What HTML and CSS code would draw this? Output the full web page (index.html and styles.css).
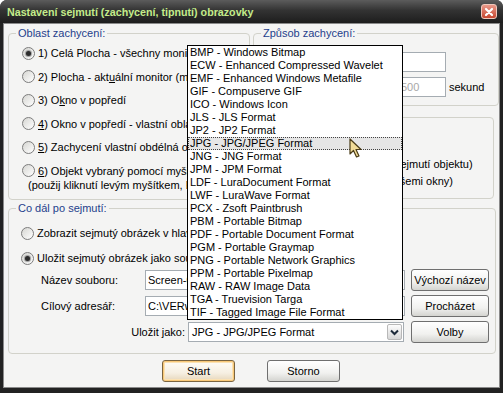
FILE: index.html
```html
<!DOCTYPE html>
<html lang="cs">

<head>
    <meta charset="UTF-8">
    <meta name="viewport" content="width=device-width, initial-scale=1.0">
    <title>Nastavení sejmutí</title>
    <link rel="stylesheet" href="styles.css">
</head>

<body>
    <div class="window">
        <div class="titlebar">
            <span class="title">Nastavení sejmutí (zachycení, tipnutí) obrazovky</span>
            <span class="close">
                <svg width="10" height="10" viewBox="0 0 10 10"><path d="M2 2 L8 8 M8 2 L2 8" stroke="#fff" stroke-width="2.2" stroke-linecap="round"/></svg>
            </span>
        </div>

        <div class="client">
            <div class="top">
                <fieldset class="group area">
                    <legend>Oblast zachycení:</legend>
                    <div class="opts">
                        <label class="opt"><span class="radio on"></span><span>1) Celá Plocha - všechny monitory</span></label>
                        <label class="opt"><span class="radio"></span><span>2) Plocha - akt<u>u</u>ální monitor (myš)</span></label>
                        <label class="opt"><span class="radio"></span><span>3) O<u>k</u>no v popředí</span></label>
                        <label class="opt"><span class="radio"></span><span><u>4</u>) Okno v popředí - vlastní oblast</span></label>
                        <label class="opt"><span class="radio"></span><span><u>5</u>) Zachycení vlastní obdélná oblasti</span></label>
                        <label class="opt last"><span class="radio"></span><span><u>6</u>) Objekt vybraný pomocí myši</span></label>
                        <div class="hint">(použij kliknutí levým myšítkem, ESC - zrušit)</div>
                    </div>
                </fieldset>

                <div class="rightcol">
                    <fieldset class="group mode">
                        <legend>Způsob zachycení:</legend>
                        <div class="field first"><span class="flabel">Klávesa:</span><input class="inp" type="text" value=""></div>
                        <div class="field"><span class="flabel">Zpoždění:</span><input class="inp" type="text" value="500" disabled><span class="unit">sekund</span></div>
                    </fieldset>
                    <fieldset class="group extra">
                        <div class="line">(po sejmutí objektu)</div>
                        <div class="line">(se všemi okny)</div>
                    </fieldset>
                </div>
            </div>

            <fieldset class="group after">
                <legend>Co dál po sejmutí:</legend>
                <label class="opt"><span class="radio"></span><span>Zobrazit sejmutý obrázek v hlavním okně</span></label>
                <label class="opt second"><span class="radio on"></span><span>Uložit sejmutý obrázek jako soubor</span></label>
                <div class="row name">
                    <span class="rlabel">Název souboru:</span>
                    <input class="inp wide" type="text" value="Screen-001">
                    <button class="btn side">Výchozí název</button>
                </div>
                <div class="row">
                    <span class="rlabel">Cílový adresář:</span>
                    <input class="inp wide" type="text" value="C:\VERwork\Screens">
                    <button class="btn side">Procházet</button>
                </div>
                <div class="row">
                    <span class="rlabel right">Uložit jako:</span>
                    <div class="combo">
                        <span class="combo-text">JPG - JPG/JPEG Format</span>
                        <span class="combo-btn">
                            <svg width="9" height="7" viewBox="0 0 9 7"><path d="M1 1.5 L4.5 5 L8 1.5" fill="none" stroke="#1d2a3a" stroke-width="2"/></svg>
                        </span>
                    </div>
                    <button class="btn side">Volby</button>
                </div>
            </fieldset>

            <div class="actions">
                <button class="btn start">Start</button>
                <button class="btn storno">Storno</button>
            </div>

            <ul class="droplist">
                <li>BMP - Windows Bitmap</li>
                <li>ECW - Enhanced Compressed Wavelet</li>
                <li>EMF - Enhanced Windows Metafile</li>
                <li>GIF - Compuserve GIF</li>
                <li>ICO - Windows Icon</li>
                <li>JLS - JLS Format</li>
                <li>JP2 - JP2 Format</li>
                <li class="sel">JPG - JPG/JPEG Format</li>
                <li>JNG - JNG Format</li>
                <li>JPM - JPM Format</li>
                <li>LDF - LuraDocument Format</li>
                <li>LWF - LuraWave Format</li>
                <li>PCX - Zsoft Paintbrush</li>
                <li>PBM - Portable Bitmap</li>
                <li>PDF - Portable Document Format</li>
                <li>PGM - Portable Graymap</li>
                <li>PNG - Portable Network Graphics</li>
                <li>PPM - Portable Pixelmap</li>
                <li>RAW - RAW Image Data</li>
                <li>TGA - Truevision Targa</li>
                <li>TIF - Tagged Image File Format</li>
            </ul>

            <svg class="cursor" width="14" height="21" viewBox="0 0 14 21">
                <path d="M1 1 L1 16 L4.5 12.5 L7.5 19 L10 18 L7 11.5 L12 11.5 Z" fill="#f2dc98" stroke="#4a3c18" stroke-width="1.2" stroke-linejoin="round"/>
            </svg>
        </div>
    </div>
</body>

</html>
```

FILE: styles.css
```css
* {
    box-sizing: border-box;
}
body {
    margin: 0;
    background: #fff;
    font-family: "Liberation Sans", Arial, sans-serif;
    font-size: 11px;
    color: #000;
}
.window {
    width: 503px;
    height: 393px;
    background: #222;
    border-radius: 7px 7px 0 0;
    display: flex;
    flex-direction: column;
}
.titlebar {
    height: 23px;
    display: flex;
    align-items: center;
    justify-content: space-between;
    padding: 0 6px 0 7px;
    background: linear-gradient(#5c5c5c, #333 45%, #1d1d1d);
    border-radius: 7px 7px 0 0;
}
.title {
    color: #c4ec8a;
    font-weight: bold;
    font-size: 10.7px;
}
.close {
    width: 16px;
    height: 15px;
    border-radius: 3px;
    border: 1px solid #efc8bc;
    background: linear-gradient(#e9998a, #c7472f);
    display: flex;
    align-items: center;
    justify-content: center;
}
.client {
    position: relative;
    flex: 1;
    margin: 0 3px 5px;
    padding: 3px 0 0 5px;
    background: #f4f4f3;
    box-shadow: inset 1px 1px 0 #8a8a8a, inset -1px -1px 0 #8a8a8a;
}
.top {
    display: flex;
    gap: 3px;
}
.group {
    margin: 0;
    padding: 0;
    min-width: 0;
    border: 1px solid #d2d2ca;
    border-radius: 4px;
}
legend {
    margin-left: 7px;
    padding: 0 2px;
    line-height: 15px;
    color: #1f3f8c;
}
.area {
    width: 242px;
    height: 174px;
}
.opts {
    padding: 5px 0 0 13px;
}
.opt {
    display: flex;
    align-items: center;
    gap: 3px;
    height: 14px;
    line-height: 14px;
    white-space: nowrap;
    margin-bottom: 9.5px;
}
.opt.last {
    margin-bottom: 0;
}
.hint {
    line-height: 14px;
    white-space: nowrap;
    padding-left: 6px;
}
.radio {
    flex: none;
    width: 13px;
    height: 13px;
    border-radius: 50%;
    border: 1px solid #7c7c7c;
    background: linear-gradient(135deg, #d6d6d2, #fff);
    display: inline-flex;
    align-items: center;
    justify-content: center;
}
.radio.on::after {
    content: "";
    width: 5px;
    height: 5px;
    border-radius: 50%;
    background: #2c2c2c;
    box-shadow: 0 0 1px 1px #9a9a9a;
}
.rightcol {
    width: 246px;
}
.mode {
    height: 80px;
}
.field {
    display: flex;
    align-items: center;
    height: 20px;
    padding-left: 3px;
    margin-top: 5px;
}
.field.first {
    margin-top: 11px;
}
.flabel {
    width: 140px;
}
.inp {
    height: 20px;
    width: 49px;
    border: 1px solid #a5acb2;
    background: #fff;
    font: inherit;
    padding: 0 3px;
    color: #000;
}
.inp:disabled {
    color: #a8a8a8;
}
.unit {
    margin-left: 3px;
}
.group.extra {
    width: 241px;
    height: 82px;
    margin-top: 11px;
    padding: 38px 0 0 122px;
}
.line {
    line-height: 17px;
    white-space: nowrap;
}
.group.after {
    width: 488px;
    height: 153px;
    margin-top: 1px;
    padding-left: 12px;
}
.after legend {
    margin-left: -5px;
}
.after .opt {
    margin: 10px 0 0;
}
.after .opt.second {
    margin-top: 11px;
}
.row {
    display: flex;
    align-items: center;
    height: 22px;
    margin-top: 4px;
    margin-left: 20px;
}
.row.name {
    margin-top: 4px;
}
.rlabel {
    width: 104px;
    white-space: nowrap;
}
.rlabel.right {
    width: 147px;
    text-align: right;
    padding-right: 3px;
}
.inp.wide {
    width: 260px;
    padding-left: 2px;
}
.combo {
    width: 216px;
    height: 20px;
    border: 1px solid #a5acb2;
    background: #fff;
    display: flex;
    align-items: center;
    justify-content: space-between;
    padding: 0 1px 0 3px;
}
.combo-btn {
    width: 15px;
    height: 16px;
    border: 1px solid #b8b8b8;
    border-radius: 2px;
    background: linear-gradient(#fdfdfd, #d6d6d6);
    display: flex;
    align-items: center;
    justify-content: center;
}
.btn {
    height: 22px;
    border: 1px solid #6f6f6f;
    border-radius: 3px;
    background: linear-gradient(#fff, #f1f1ef 60%, #d4d4d0);
    font: inherit;
    color: #000;
    padding: 0;
}
.side {
    width: 78px;
    margin-left: 6px;
}
.row:last-child .side {
    margin-left: 7px;
}
.actions {
    display: flex;
    margin-top: 6px;
    padding-left: 154px;
    gap: 32px;
}
.start {
    width: 73px;
    border-color: #7a6440;
    box-shadow: inset 0 0 0 1px #f8c878, inset 0 0 0 2px #fbe2b4;
    background: linear-gradient(#fffdf8, #f6efe2 60%, #e6d6ba);
}
.storno {
    width: 73px;
}
.droplist {
    position: absolute;
    left: 184px;
    top: 22px;
    width: 216px;
    height: 275px;
    margin: 0;
    padding: 0;
    list-style: none;
    border: 1px solid #000;
    background: #fff;
}
.droplist li {
    height: 13px;
    line-height: 13px;
    padding-left: 2px;
    white-space: nowrap;
    overflow: hidden;
}
.droplist li.sel {
    background: #e6e6e6;
    outline: 1px dotted #444;
    outline-offset: -1px;
}
.cursor {
    position: absolute;
    left: 346px;
    top: 115px;
}
```
